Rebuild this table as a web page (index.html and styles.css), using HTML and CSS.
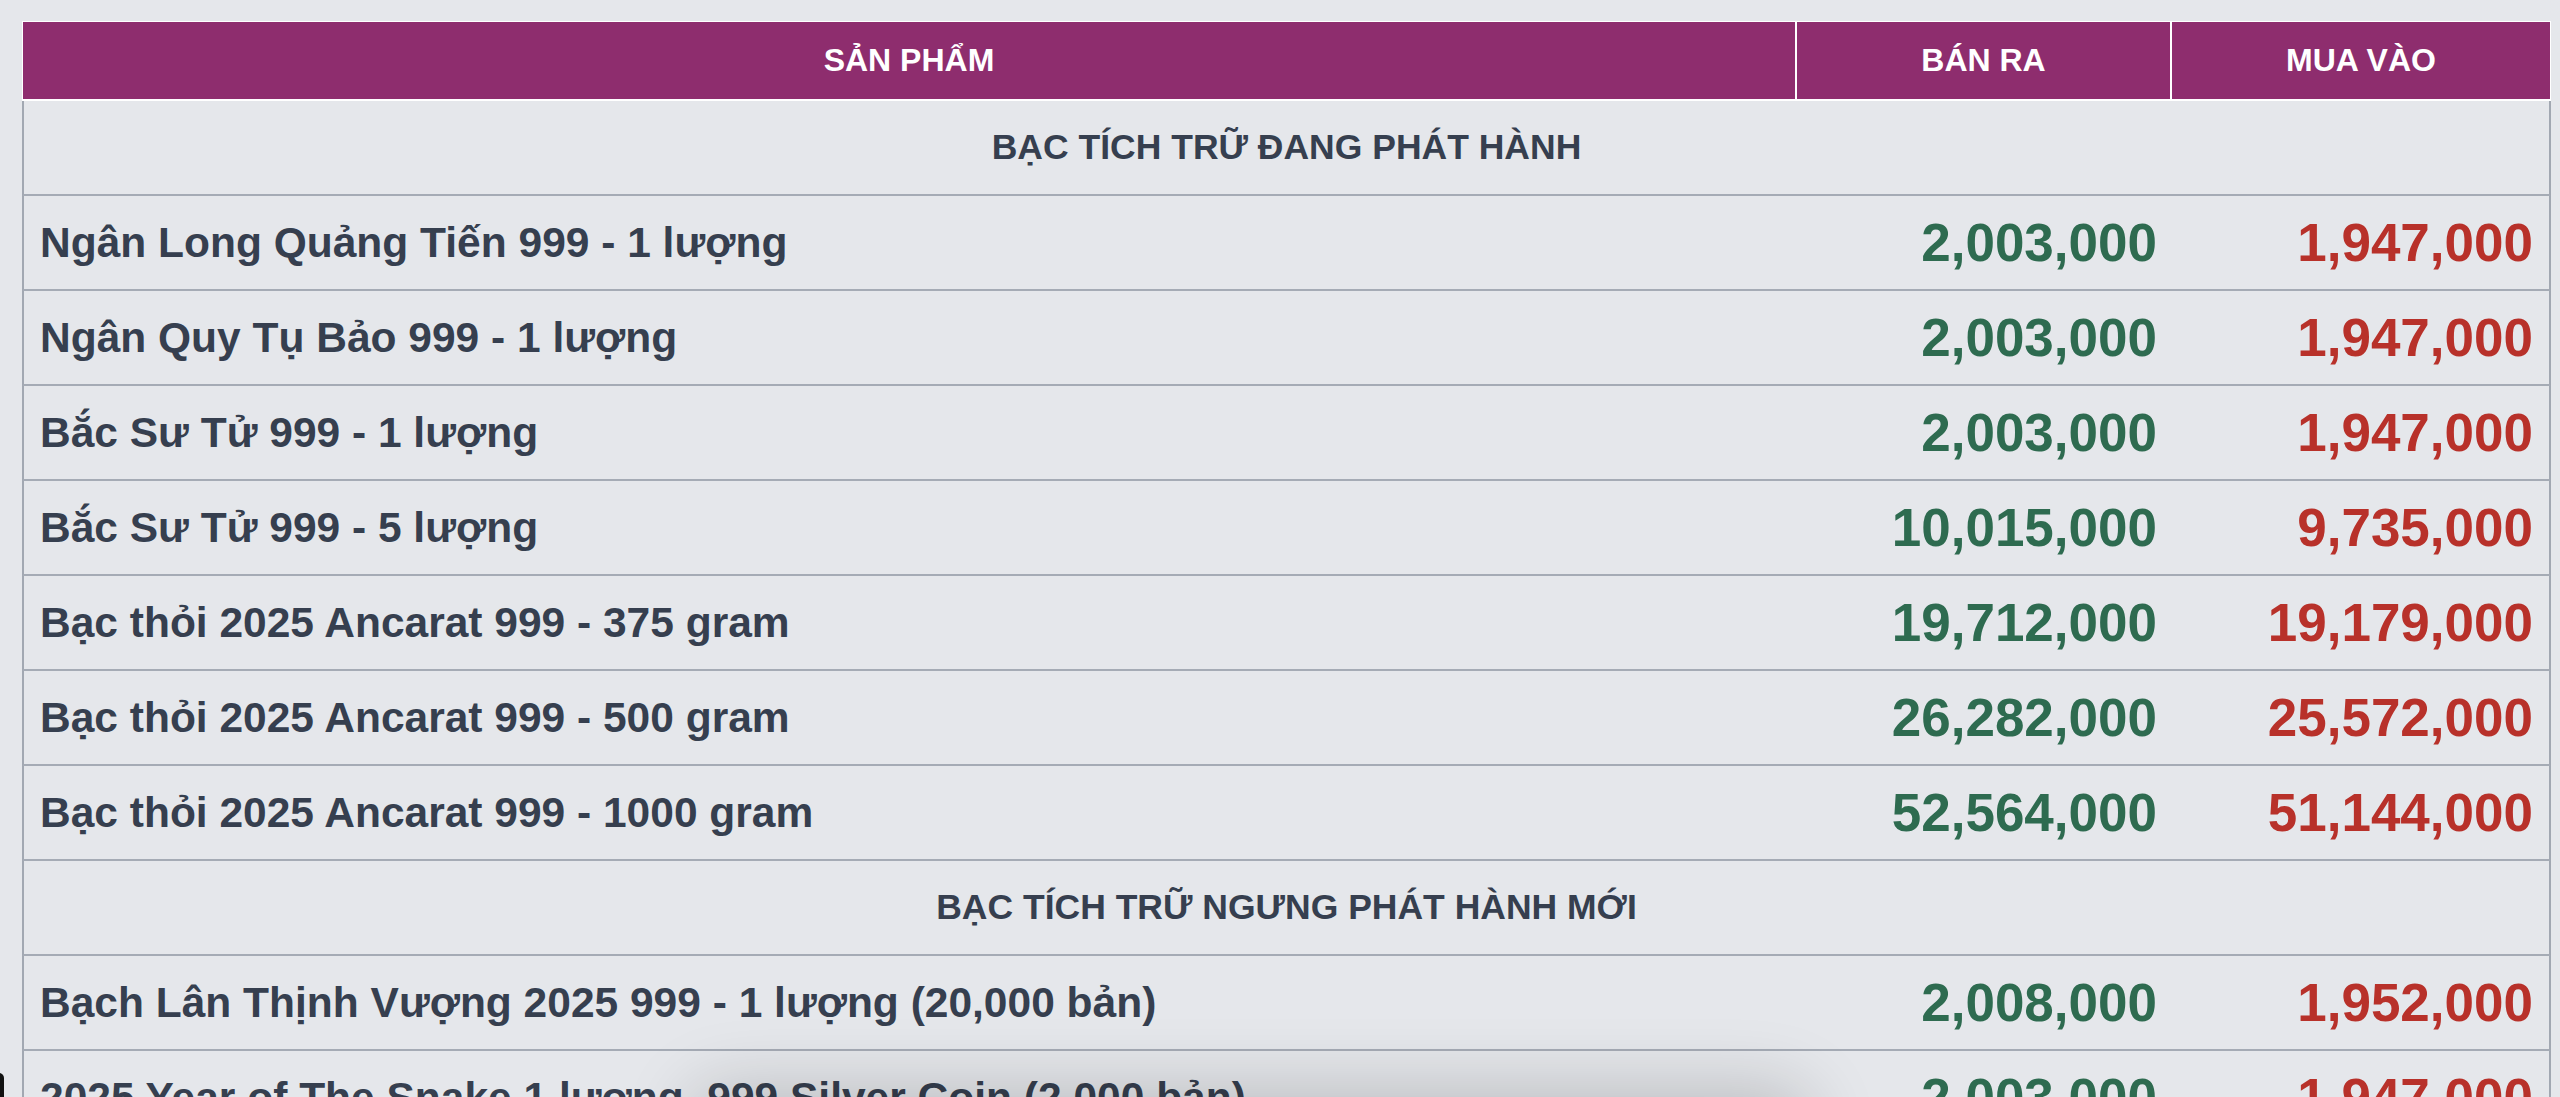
FILE: index.html
```html
<!DOCTYPE html>
<html lang="vi">
<head>
<meta charset="utf-8">
<title>Bảng giá bạc</title>
<link rel="stylesheet" href="styles.css">
</head>
<body>
<main class="page">
  <div class="price-table">
    <div class="row head">
      <div class="cell h-name">SẢN PHẨM</div>
      <div class="cell h-num">BÁN RA</div>
      <div class="cell h-num">MUA VÀO</div>
    </div>
    <div class="row section"><div class="cell sec-title">BẠC TÍCH TRỮ ĐANG PHÁT HÀNH</div></div>
    <div class="row"><div class="cell name">Ngân Long Quảng Tiến 999 - 1 lượng</div><div class="cell sell">2,003,000</div><div class="cell buy">1,947,000</div></div>
    <div class="row"><div class="cell name">Ngân Quy Tụ Bảo 999 - 1 lượng</div><div class="cell sell">2,003,000</div><div class="cell buy">1,947,000</div></div>
    <div class="row"><div class="cell name">Bắc Sư Tử 999 - 1 lượng</div><div class="cell sell">2,003,000</div><div class="cell buy">1,947,000</div></div>
    <div class="row"><div class="cell name">Bắc Sư Tử 999 - 5 lượng</div><div class="cell sell">10,015,000</div><div class="cell buy">9,735,000</div></div>
    <div class="row"><div class="cell name">Bạc thỏi 2025 Ancarat 999 - 375 gram</div><div class="cell sell">19,712,000</div><div class="cell buy">19,179,000</div></div>
    <div class="row"><div class="cell name">Bạc thỏi 2025 Ancarat 999 - 500 gram</div><div class="cell sell">26,282,000</div><div class="cell buy">25,572,000</div></div>
    <div class="row"><div class="cell name">Bạc thỏi 2025 Ancarat 999 - 1000 gram</div><div class="cell sell">52,564,000</div><div class="cell buy">51,144,000</div></div>
    <div class="row section"><div class="cell sec-title">BẠC TÍCH TRỮ NGƯNG PHÁT HÀNH MỚI</div></div>
    <div class="row"><div class="cell name">Bạch Lân Thịnh Vượng 2025 999 - 1 lượng (20,000 bản)</div><div class="cell sell">2,008,000</div><div class="cell buy">1,952,000</div></div>
    <div class="row"><div class="cell name">2025 Year of The Snake 1 lượng .999 Silver Coin (2,000 bản)</div><div class="cell sell">2,003,000</div><div class="cell buy">1,947,000</div></div>
  </div>
</main>
<div class="float-shadow"></div>
<div class="corner"></div>
</body>
</html>
```

FILE: styles.css
```css
html, body {
  margin: 0;
  padding: 0;
  background: #e5e7eb;
  height: 100%;
  overflow: hidden;
}
body {
  font-family: "Liberation Sans", Arial, sans-serif;
  font-weight: 700;
  color: #374151;
}
.page {
  padding: 21px 9px 0 22px;
}
.price-table {
  width: 2529px;
  display: flex;
  flex-direction: column;
}
.row {
  display: grid;
  grid-template-columns: 1773px 375px 1fr;
  height: 95px;
  box-sizing: border-box;
  border-left: 2px solid #a2a8b2;
  border-right: 2px solid #a2a8b2;
  border-bottom: 2px solid #a5abb5;
}
.row.head {
  height: 80px;
  border: none;
  border-top: 1px solid #ffffff;
  border-bottom: 2px solid #ffffff;
  background: #8e2d6e;
}
.row.section {
  grid-template-columns: 1fr;
}
.cell {
  display: flex;
  align-items: center;
  white-space: nowrap;
  overflow: hidden;
}
.h-name, .h-num {
  justify-content: center;
  color: #ffffff;
  font-size: 32px;
}
.h-name {
  border-left: 1px solid #ffffff;
}
.h-num {
  border-left: 2px solid #ffffff;
}
.h-num:last-child {
  border-right: 1px solid #ffffff;
}
.sec-title {
  justify-content: center;
  font-size: 35.5px;
  color: #363f4f;
}
.name {
  padding-left: 16px;
  font-size: 42.5px;
  color: #363f4f;
}
.sell, .buy {
  justify-content: flex-end;
  padding-right: 15px;
  font-size: 53px;
}
.sell {
  color: #2e6b50;
}
.buy {
  color: #b8312a;
  padding-right: 16px;
}
.float-shadow {
  position: fixed;
  left: 700px;
  width: 1100px;
  bottom: -80px;
  height: 80px;
  border-radius: 24px;
  background: #e5e7eb;
  box-shadow: 0 0 70px 10px rgba(0, 0, 0, 0.18);
}
.corner {
  position: fixed;
  left: -6px;
  bottom: -6px;
  width: 10px;
  height: 30px;
  border-radius: 8px;
  background: #111;
}
```
